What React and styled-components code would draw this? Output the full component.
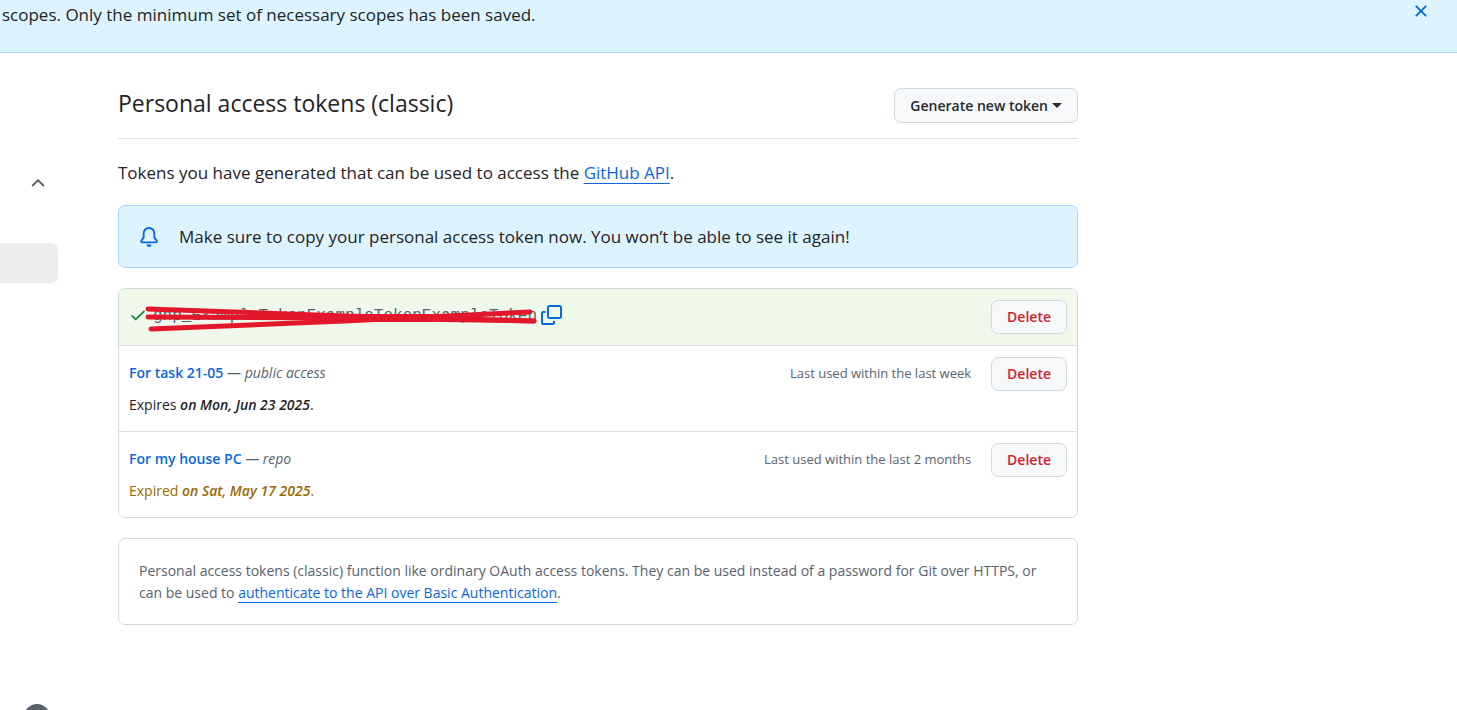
import React from "react";
import styled, { createGlobalStyle } from "styled-components";

const Global = createGlobalStyle`
  *, *::before, *::after { box-sizing: border-box; }
  body { margin: 0; background: #fff; color: #1f2328; font-family: "Open Sans", "Noto Sans", sans-serif; font-size: 14px; line-height: 22px; }
  h1, p, ul { margin: 0; padding: 0; }
`;

const Page = styled.div`
  min-height: 100vh;
  display: flex;
  flex-direction: column;
`;

const Banner = styled.div`
  display: flex;
  justify-content: space-between;
  align-items: flex-start;
  padding: 0 26px 22px 2px;
  border-bottom: 1px solid #a6d8ff;
  background: #ddf4ff;
  font-size: 17px;
  line-height: 30px;
`;

const IconButton = styled.button`
  display: inline-flex;
  align-items: center;
  justify-content: center;
  padding: 0;
  border: 0;
  background: none;
  color: #0969da;
  cursor: pointer;
`;

const Dismiss = styled(IconButton)`
  width: 20px;
  height: 22px;
`;

const Body = styled.div`
  flex: 1;
  display: grid;
  grid-template-columns: 58px minmax(0, 960px);
  column-gap: 60px;
`;

const Sidebar = styled.nav`
  display: flex;
  flex-direction: column;
  padding-top: 120px;
`;

const Toggle = styled(IconButton)`
  width: 20px;
  height: 20px;
  margin-left: 28px;
  color: #59636e;
`;

const SelectedItem = styled.div`
  height: 40px;
  margin-top: 50px;
  border-radius: 0 7px 7px 0;
  background: #ecedef;
`;

const HelpBadge = styled.svg`
  display: block;
  margin: auto 0 0 24px;
`;

const Main = styled.main`
  padding: 35px 0 40px;
`;

const Header = styled.header`
  display: flex;
  justify-content: space-between;
  align-items: flex-start;
  padding-bottom: 15px;
  border-bottom: 1px solid #dce1e6;
`;

const Title = styled.h1`
  font-size: 23px;
  line-height: 30px;
  font-weight: 400;
`;

const Button = styled.button`
  display: inline-flex;
  align-items: center;
  gap: 4px;
  height: 35px;
  padding: 0 15px;
  border: 1px solid #d1d9e0;
  border-radius: 7px;
  background: #f6f8fa;
  color: #25292e;
  font: 600 14px/22px "Open Sans", "Noto Sans", sans-serif;
  cursor: pointer;
`;

const DeleteButton = styled(Button)`
  height: 34px;
  color: #cf222e;
`;

const Caret = styled.span`
  border: 5px solid transparent;
  border-top-color: currentColor;
  border-bottom: 0;
`;

const Intro = styled.p`
  margin-top: 20px;
  font-size: 17px;
  line-height: 28px;
`;

const Link = styled.a`
  color: #0969da;
  text-decoration: underline;
  text-decoration-thickness: 1px;
  text-underline-offset: 4px;
`;

const Notice = styled.div`
  display: flex;
  align-items: center;
  gap: 20px;
  margin-top: 18px;
  padding: 16px 20px;
  border: 1px solid #a6d8ff;
  border-radius: 7px;
  background: #ddf4ff;
  font-size: 17px;
  line-height: 29px;
  svg { color: #0969da; }
`;

const TokenList = styled.ul`
  margin-top: 20px;
  border: 1px solid #d1d9e0;
  border-radius: 7px;
  list-style: none;
  overflow: hidden;
`;

const TokenItem = styled.li`
  display: flex;
  align-items: flex-start;
  justify-content: space-between;
  padding: 11px 10px;
  background: ${(p) => (p.$fresh ? "#eff8eb" : "#fff")};
  & + & { border-top: 1px solid #d9dfe5; }
`;

const NewToken = styled.div`
  display: flex;
  align-items: center;
  height: 30px;
  color: #1a7f37;
`;

const Redacted = styled.span`
  position: relative;
  margin: 0 3px 0 6px;
`;

const TokenText = styled.code`
  color: #59636e;
  font: 16px/22px "Liberation Mono", monospace;
`;

const Strokes = styled.svg`
  position: absolute;
  left: -9px;
  top: 1px;
`;

const Details = styled.div`
  display: flex;
  flex-direction: column;
  gap: 10px;
  padding: 5px 0 4px;
`;

const TokenName = styled.a`
  color: #0969da;
  font-weight: 600;
  text-decoration: none;
`;

const Scope = styled.span`
  color: #59636e;
`;

const Expiry = styled.p`
  color: ${(p) => (p.$expired ? "#9a6700" : "#1f2328")};
  em { font-weight: 600; }
`;

const Actions = styled.div`
  display: flex;
  align-items: flex-start;
  gap: 20px;
`;

const LastUsed = styled.span`
  padding-top: 5px;
  color: #59636e;
  font-size: 13px;
`;

const InfoBox = styled.p`
  margin-top: 20px;
  padding: 21px 20px 20px;
  border: 1px solid #d1d9e0;
  border-radius: 7px;
  color: #59636e;
`;

const Icon = ({ size, children }) => (
  <svg width={size} height={size} viewBox="0 0 16 16" fill="currentColor" aria-hidden="true">
    {children}
  </svg>
);

const XIcon = () => (
  <Icon size={20}>
    <path d="M3.72 3.72a.75.75 0 0 1 1.06 0L8 6.94l3.22-3.22a.749.749 0 0 1 1.275.326.749.749 0 0 1-.215.734L9.06 8l3.22 3.22a.749.749 0 0 1-.326 1.275.749.749 0 0 1-.734-.215L8 9.06l-3.22 3.22a.751.751 0 0 1-1.042-.018.751.751 0 0 1-.018-1.042L6.94 8 3.72 4.78a.75.75 0 0 1 0-1.06Z" />
  </Icon>
);

const ChevronUpIcon = () => (
  <Icon size={20}>
    <path d="M3.22 10.53a.749.749 0 0 1 0-1.06l4.25-4.25a.749.749 0 0 1 1.06 0l4.25 4.25a.749.749 0 1 1-1.06 1.06L8 6.811 4.28 10.53a.749.749 0 0 1-1.06 0Z" />
  </Icon>
);

const BellIcon = () => (
  <Icon size={20}>
    <path d="M8 16a2 2 0 0 0 1.985-1.75c.017-.137-.097-.25-.235-.25h-3.5c-.138 0-.252.113-.235.25A2 2 0 0 0 8 16ZM3 5a5 5 0 0 1 10 0v2.947c0 .05.015.098.042.139l1.703 2.555A1.519 1.519 0 0 1 13.482 13H2.518a1.516 1.516 0 0 1-1.263-2.36l1.703-2.554A.255.255 0 0 0 3 7.947Zm5-3.5A3.5 3.5 0 0 0 4.5 5v2.947c0 .346-.102.683-.294.97l-1.703 2.556a.017.017 0 0 0-.003.01l.001.006c0 .002.002.004.004.006l.006.004.007.001h10.964l.007-.001.006-.004.004-.006.001-.007a.017.017 0 0 0-.003-.01l-1.703-2.554a1.745 1.745 0 0 1-.294-.97V5A3.5 3.5 0 0 0 8 1.5Z" />
  </Icon>
);

const CheckIcon = () => (
  <Icon size={18}>
    <path d="M13.78 4.22a.75.75 0 0 1 0 1.06l-7.25 7.25a.75.75 0 0 1-1.06 0L2.22 9.28a.751.751 0 0 1 .018-1.042.751.751 0 0 1 1.042-.018L6 10.94l6.72-6.72a.75.75 0 0 1 1.06 0Z" />
  </Icon>
);

const CopyIcon = () => (
  <svg width="22" height="22" viewBox="0 0 22 22" fill="none" stroke="currentColor" strokeWidth="2" aria-hidden="true">
    <rect x="8" y="2" width="13" height="12" rx="1.5" />
    <path d="M5.500 8H3.500Q2 8 2 9.500V18.500Q2 20 3.500 20H12.500Q14 20 14 18.500V17" />
  </svg>
);

const tokens = [
  { name: "For task 21-05", scope: "public access", verb: "Expires", date: "on Mon, Jun 23 2025", used: "Last used within the last week" },
  { name: "For my house PC", scope: "repo", verb: "Expired", date: "on Sat, May 17 2025", used: "Last used within the last 2 months", expired: true },
];

export default function App() {
  return (
    <Page>
      <Global />
      <Banner role="status">
        <p>scopes. Only the minimum set of necessary scopes has been saved.</p>
        <Dismiss aria-label="Dismiss"><XIcon /></Dismiss>
      </Banner>
      <Body>
        <Sidebar aria-label="Settings">
          <Toggle aria-label="Collapse section"><ChevronUpIcon /></Toggle>
          <SelectedItem />
          <HelpBadge width="26" height="6" viewBox="0 0 26 6" aria-hidden="true">
            <circle cx="13" cy="13" r="13" fill="#59636e" />
          </HelpBadge>
        </Sidebar>
        <Main>
          <Header>
            <Title>Personal access tokens (classic)</Title>
            <Button>Generate new token <Caret /></Button>
          </Header>
          <Intro>
            Tokens you have generated that can be used to access the <Link href="#api">GitHub API</Link>.
          </Intro>
          <Notice>
            <BellIcon />
            <p>Make sure to copy your personal access token now. You won’t be able to see it again!</p>
          </Notice>
          <TokenList>
            <TokenItem $fresh>
              <NewToken>
                <CheckIcon />
                <Redacted>
                  <TokenText>ghp_ExampleTokenExampleTokenExampleToken</TokenText>
                  <Strokes width="396" height="30" viewBox="0 0 396 30" fill="none" stroke="#e3172c" strokeWidth="5" strokeLinecap="round" aria-hidden="true">
                    <path d="M4 4L200 11L390 16" />
                    <path d="M4 12L200 13L390 16" />
                    <path d="M7 24L200 16L386 7" />
                    <path d="M175 13L290 13" strokeWidth="8" />
                  </Strokes>
                </Redacted>
                <IconButton aria-label="Copy token"><CopyIcon /></IconButton>
              </NewToken>
              <DeleteButton>Delete</DeleteButton>
            </TokenItem>
            {tokens.map((t) => (
              <TokenItem key={t.name}>
                <Details>
                  <p><TokenName href="#token">{t.name}</TokenName> <Scope>— <em>{t.scope}</em></Scope></p>
                  <Expiry $expired={t.expired}>{t.verb} <em>{t.date}</em>.</Expiry>
                </Details>
                <Actions>
                  <LastUsed>{t.used}</LastUsed>
                  <DeleteButton>Delete</DeleteButton>
                </Actions>
              </TokenItem>
            ))}
          </TokenList>
          <InfoBox>
            Personal access tokens (classic) function like ordinary OAuth access tokens. They can be used instead of a password for Git over HTTPS, or can be used to <Link href="#auth">authenticate to the API over Basic Authentication</Link>.
          </InfoBox>
        </Main>
      </Body>
    </Page>
  );
}
